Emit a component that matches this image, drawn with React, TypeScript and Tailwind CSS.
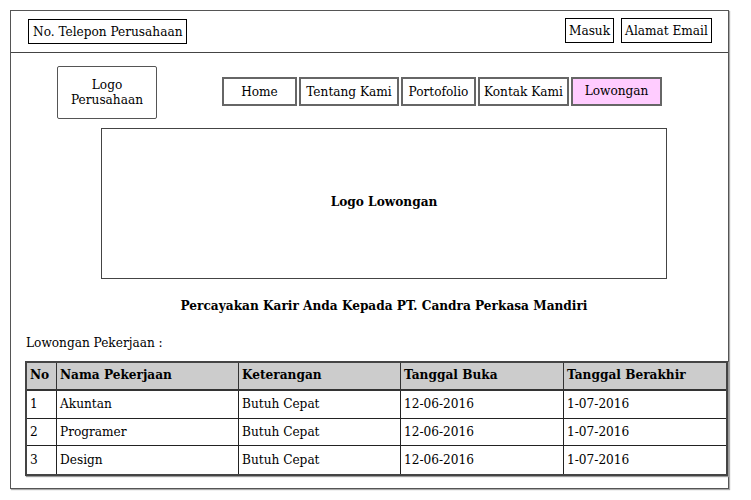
import React from 'react'

const NAV = [
  { label: 'Home', w: 'w-[75px]' },
  { label: 'Tentang Kami', w: 'w-[100px]' },
  { label: 'Portofolio', w: 'w-[75px]' },
  { label: 'Kontak Kami', w: 'w-[91px]' },
  { label: 'Lowongan', w: 'w-[91px]', active: true },
]

const COLS = ['No', 'Nama Pekerjaan', 'Keterangan', 'Tanggal Buka', 'Tanggal Berakhir']
const WIDTHS = ['w-[29px]', 'w-[182px]', 'w-[162px]', 'w-[163px]', 'w-[163px]']

const ROWS = [
  ['1', 'Akuntan', 'Butuh Cepat', '12-06-2016', '1-07-2016'],
  ['2', 'Programer', 'Butuh Cepat', '12-06-2016', '1-07-2016'],
  ['3', 'Design', 'Butuh Cepat', '12-06-2016', '1-07-2016'],
]

export default function App() {
  return (
    <div className="p-[10px] bg-white text-black font-['DejaVu_Serif_Condensed','DejaVu_Serif',serif] font-stretch-condensed text-[13.5px] leading-none">
      <div className="w-[719px] h-[479px] border border-[#555] shadow-[1px_1px_1px_#aaa] flex flex-col">
        <header className="h-[42px] shrink-0 border-b border-[#444] flex items-center justify-between pl-[17px] pr-[16px]">
          <div className="h-[25px] px-[4px] flex items-center border border-black">No. Telepon Perusahaan</div>
          <div className="flex gap-[7px] -mt-[2px]">
            <div className="h-[25px] w-[49px] flex items-center justify-center border border-black">Masuk</div>
            <div className="h-[25px] w-[91px] flex items-center justify-center border border-black">Alamat Email</div>
          </div>
        </header>

        <div className="flex items-start pl-[46px] pt-[13px]">
          <div className="w-[100px] h-[53px] border border-[#555] rounded-[2px] flex flex-col items-center justify-center leading-[15px] pb-[2px]">
            <span>Logo</span>
            <span>Perusahaan</span>
          </div>
          <nav className="flex gap-[2px] ml-[65px] mt-[11px]">
            {NAV.map(n => (
              <div
                key={n.label}
                className={`${n.w} h-[29px] border-2 border-[#666] flex items-center justify-center ${n.active ? 'bg-[#ffccff] pb-[2px]' : 'bg-white'}`}
              >
                {n.label}
              </div>
            ))}
          </nav>
        </div>

        <div className="ml-[90px] mt-[9px] w-[566px] h-[151px] border border-[#444] flex items-center justify-center font-bold pb-[3px]">
          Logo Lowongan
        </div>

        <div className="ml-[90px] w-[566px] mt-[20px] text-center font-bold">
          Percayakan Karir Anda Kepada PT. Candra Perkasa Mandiri
        </div>

        <div className="ml-[15px] mt-[23px]">Lowongan Pekerjaan :</div>

        <div className="ml-[14px] mt-[12px] w-[703px] border-2 border-[#444] shadow-[1px_1px_1px_#999]">
          <div className="flex h-[28px] bg-[#cccccc] border-b-2 border-[#333] font-bold">
            {COLS.map((c, i) => (
              <div key={c} className={`${WIDTHS[i]} flex items-center px-[3px] pb-[2px] ${i > 0 ? 'border-l border-[#333]' : ''}`}>
                {c}
              </div>
            ))}
          </div>
          {ROWS.map((r, ri) => (
            <div key={ri} className={`flex h-[27.5px] ${ri < ROWS.length - 1 ? 'border-b border-[#222]' : ''}`}>
              {r.map((cell, i) => (
                <div key={i} className={`${WIDTHS[i]} flex items-center px-[3px] pb-[1px] ${i > 0 ? 'border-l border-[#222]' : ''}`}>
                  {cell}
                </div>
              ))}
            </div>
          ))}
        </div>
      </div>
    </div>
  )
}
